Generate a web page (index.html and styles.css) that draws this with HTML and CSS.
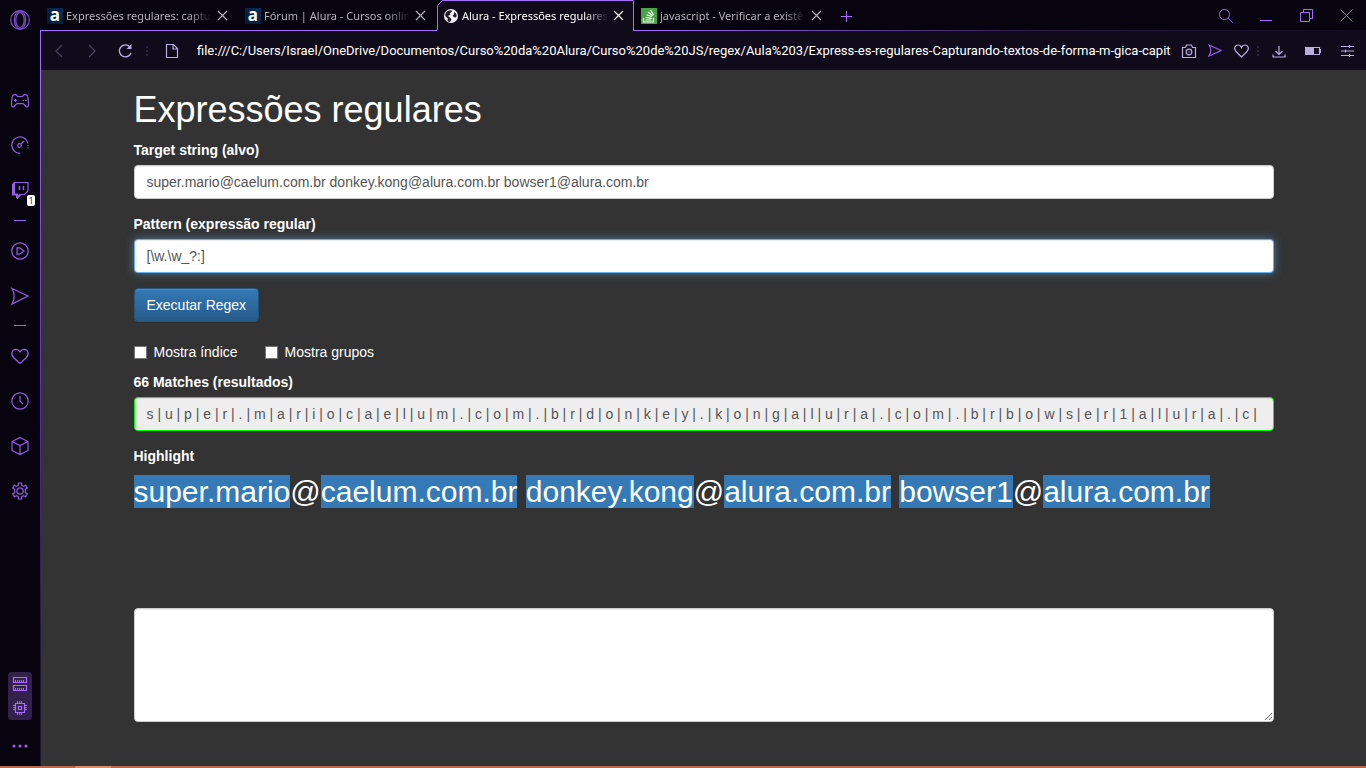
FILE: index.html
```html
<!DOCTYPE html>
<html lang="pt-BR">
<head>
<meta charset="utf-8">
<meta name="viewport" content="width=device-width, initial-scale=1">
<title>Alura - Expressões regulares</title>
<link rel="stylesheet" href="styles.css">
</head>
<body>
<div class="window">
  <nav class="sidebar" aria-label="Barra lateral">
    <button class="side-logo" aria-label="Menu">
      <svg width="22" height="22" viewBox="0 0 22 22"><circle cx="11" cy="11" r="9.3"/><ellipse cx="11" cy="11" rx="5.6" ry="9.2"/><ellipse cx="11" cy="11" rx="4.2" ry="7.4"/></svg>
    </button>
    <button class="side-item" aria-label="GX Corner">
      <svg width="20" height="16" viewBox="0 0 20 16"><path d="M6 1.700C4 1.200 2.600 2 2.200 3.800L1.500 9.500C1.200 12.500 1.800 14 3.200 14c1.800 0 2.200-3.400 4-3.400h5.600c1.800 0 2.200 3.400 4 3.400 1.400 0 2-1.500 1.700-4.500L17.800 3.800C17.400 2 16 1.200 14 1.700L12.500 3.500h-5z"/><path d="M5.500 6v3M4 7.500h3M12.500 7.500h1.500M15 7.500h1.500"/></svg>
    </button>
    <button class="side-item" aria-label="GX Control">
      <svg width="20" height="20" viewBox="0 0 20 20"><path d="M10 17.300A8.200 8.200 0 1 1 18 7.500"/><path d="M18 9v5" stroke-dasharray="1 1.500"/><circle cx="9.500" cy="9.500" r="1.800"/><path d="M11 8l3-3"/></svg>
    </button>
    <button class="side-item" aria-label="Twitch">
      <svg width="20" height="20" viewBox="0 0 20 20"><path d="M4 1.500h14v8.500l-3.500 3.500H11L7.500 17v-3.500H4z"/><path class="solid" d="M2 3l3-1.500v11h3v2l1.500-1.500H11L8 17H6v-2.500H2z"/><path d="M9.500 5v4M13.500 5v4" stroke-width="1.500"/></svg>
      <span class="badge">1</span>
    </button>
    <span class="side-rule"></span>
    <button class="side-item" aria-label="Player">
      <svg width="20" height="20" viewBox="0 0 20 20"><circle cx="10" cy="10" r="8.200"/><path d="M7 6.800v6.400h2.500l4.500-3.200-4.500-3.200z"/></svg>
    </button>
    <button class="side-item" aria-label="My Flow">
      <svg width="20" height="20" viewBox="0 0 20 20"><path d="M2 2.500L18 10 2 18q4.500-8 0-15.500z"/></svg>
    </button>
    <span class="side-rule"></span>
    <button class="side-item" aria-label="Favoritos">
      <svg width="20" height="18" viewBox="0 0 20 18"><path d="M10 16.500L3.500 10.500C0 6.500 2.500 2.300 5.800 2.300 8 2.300 9.200 3.500 10 5 10.800 3.500 12 2.300 14.200 2.300c3.300 0 5.800 4.200 2.300 8.200z"/></svg>
    </button>
    <button class="side-item" aria-label="Histórico">
      <svg width="20" height="20" viewBox="0 0 20 20"><circle cx="10" cy="10" r="8.200"/><path d="M10 5v5l3 3.200"/></svg>
    </button>
    <button class="side-item" aria-label="Extensões">
      <svg width="20" height="20" viewBox="0 0 20 20"><path d="M10 1.500l8 4v9l-8 4-8-4v-9zM2 5.500l8 4 8-4M10 9.500v9"/></svg>
    </button>
    <button class="side-item" aria-label="Configurações">
      <svg width="20" height="20" viewBox="0 0 20 20"><circle cx="10" cy="10" r="3.200"/><path d="M8.400 2h3.200v2.200l2 1.200 2-1.100 1.700 2.800-2 1.200v3.400l2 1.200-1.700 2.800-2-1.100-2 1.200V18H8.400v-2.200l-2-1.200-2 1.100-1.700-2.800 2-1.200V8.300l-2-1.200 1.700-2.800 2 1.100 2-1.200z"/></svg>
    </button>
    <button class="side-meter" aria-label="RAM e CPU">
      <svg width="16" height="16" viewBox="0 0 16 16"><path d="M1.500 1.500h13v5h-13zM1.500 9.500h13v5h-13z"/><path d="M3 5h10M3 13h10" stroke-width="2" stroke-dasharray="1 1"/></svg>
      <svg width="16" height="16" viewBox="0 0 16 16"><path d="M3.500 3.500h9v9h-9zM6.500 6.500h3v3h-3z"/><path d="M5 2h6M5 14h6" stroke-width="2" stroke-dasharray="1 1"/><path d="M2 5v6M14 5v6" stroke-width="2" stroke-dasharray="1 1"/></svg>
    </button>
    <button class="side-more" aria-label="Mais">
      <svg width="16" height="4" viewBox="0 0 16 4"><g class="solid"><circle cx="2" cy="2" r="1.600"/><circle cx="8" cy="2" r="1.600"/><circle cx="14" cy="2" r="1.600"/></g></svg>
    </button>
  </nav>

  <div class="main">
    <header class="tabbar">
      <div class="tab">
        <span class="favicon alura">a</span>
        <a class="tab-title" href="#">Expressões regulares: captu</a>
        <button class="tab-close" aria-label="Fechar aba"><svg width="11" height="11" viewBox="0 0 11 11"><path d="M1 1l9 9M10 1l-9 9"/></svg></button>
      </div>
      <div class="tab">
        <span class="favicon alura">a</span>
        <a class="tab-title" href="#">Fórum | Alura - Cursos onlin</a>
        <button class="tab-close" aria-label="Fechar aba"><svg width="11" height="11" viewBox="0 0 11 11"><path d="M1 1l9 9M10 1l-9 9"/></svg></button>
      </div>
      <div class="tab active">
        <svg class="tab-shape" width="198" height="31" viewBox="0 0 198 31"><path d="M0 30.500L.5 30V5.500L5.500.5H196.500V30.500H198V31H0z"/><path class="edge" d="M-1 30.500L.5 29.500V5.500L5.500.5H196.500V30.500H198"/></svg>
        <svg class="favicon globe" width="16" height="16" viewBox="0 0 16 16"><circle cx="8" cy="8" r="7" fill="#f4f2f8"/><path fill="#211d2b" d="M3 4.500Q5 2 8.500 2.300L9 3.500 7 5l.5 1.500L5 8l2 1.500 1.500 2L7 14Q5.500 14 4.500 13l.3-2.500L2.200 8Q2 6 3 4.500zM11 4l2 1.500.8 2.500-1 1.500-2-.5L9.500 7.500 11 6.500z"/></svg>
        <a class="tab-title" href="#">Alura - Expressões regulares</a>
        <button class="tab-close" aria-label="Fechar aba"><svg width="11" height="11" viewBox="0 0 11 11"><path d="M1 1l9 9M10 1l-9 9"/></svg></button>
      </div>
      <div class="tab">
        <svg class="favicon" width="16" height="16" viewBox="0 0 16 16"><path fill="#47a344" d="M0 0h16v16H0z"/><path d="M2.500 10v4h10v-4M4.500 12h6M4.700 9.500l6 .8M5.500 6.700l5.600 2M7 4l4.700 3.700M9.500 2l3.200 5" fill="none" stroke="#fff" stroke-width="1.200"/></svg>
        <a class="tab-title" href="#">javascript - Verificar a existê</a>
        <button class="tab-close" aria-label="Fechar aba"><svg width="11" height="11" viewBox="0 0 11 11"><path d="M1 1l9 9M10 1l-9 9"/></svg></button>
      </div>
      <button class="tab-new" aria-label="Nova aba"><svg width="12" height="12" viewBox="0 0 12 12"><path d="M6.500 1v11M1 6.500h11"/></svg></button>
      <div class="window-controls">
        <button aria-label="Pesquisar"><svg width="16" height="16" viewBox="0 0 16 16"><circle cx="6.500" cy="6.500" r="5"/><path d="M10.200 10.200l4.500 4.500"/></svg></button>
        <button aria-label="Minimizar"><svg width="12" height="12" viewBox="0 0 12 12"><path d="M0 10.500h12"/></svg></button>
        <button aria-label="Restaurar"><svg width="13" height="13" viewBox="0 0 13 13"><path d="M.5 3.500h9v9h-9zM3.500 3.500v-3h9v9h-3"/></svg></button>
        <button aria-label="Fechar"><svg width="13" height="13" viewBox="0 0 13 13"><path d="M.5.5l12 12M12.500.5l-12 12"/></svg></button>
      </div>
    </header>

    <div class="toolbar">
      <button class="nav dim" aria-label="Voltar"><svg width="8" height="14" viewBox="0 0 8 14"><path d="M7 1L1 7l6 6"/></svg></button>
      <button class="nav dim" aria-label="Avançar"><svg width="8" height="14" viewBox="0 0 8 14"><path d="M1 1l6 6-6 6"/></svg></button>
      <button class="nav" aria-label="Recarregar"><svg width="16" height="16" viewBox="0 0 16 16"><path d="M14 10A6 6 0 1 1 13 4" stroke-width="1.400"/><path class="solid" d="M14.500 1v5h-5z"/></svg></button>
      <span class="dots"></span>
      <label class="page-icon" for="address" aria-label="Endereço"><svg width="14" height="16" viewBox="0 0 14 16"><path d="M1.500 1.500h7l4 4v9h-11zM8 1.500V6h4.500"/></svg></label>
      <input class="address" id="address" type="text" value="file:///C:/Users/Israel/OneDrive/Documentos/Curso%20da%20Alura/Curso%20de%20JS/regex/Aula%203/Express-es-regulares-Capturando-textos-de-forma-m-gica-capit">
      <button class="tool" aria-label="Captura"><svg width="16" height="14" viewBox="0 0 16 14"><path d="M1.500 3.500h3l1-2.500h5l1 2.500h3v10h-13z"/><circle cx="8" cy="8" r="2.800"/><circle class="solid" cx="8" cy="8" r=".7"/></svg></button>
      <button class="tool accent" aria-label="Enviar ao My Flow"><svg width="14" height="13" viewBox="0 0 14 13"><path d="M1 1l12 5.500L1 12q3.500-5.500 0-11z"/></svg></button>
      <button class="tool" aria-label="Favoritar"><svg width="15" height="14" viewBox="0 0 15 14"><path d="M7.500 13L2 7.500C-.8 4 1.500 1 4 1 6 1 7 2.200 7.500 3.500 8 2.200 9 1 11 1c2.500 0 4.800 3 2 6.500z"/></svg></button>
      <span class="dots short"></span>
      <button class="tool wide" aria-label="Downloads"><svg width="14" height="14" viewBox="0 0 14 14"><path d="M7 2v8M3.500 7L7 10.500 10.500 7M1 10.500v2.500h12v-2.500"/></svg></button>
      <button class="tool wide" aria-label="Bateria"><svg width="16" height="8" viewBox="0 0 16 8"><path d="M.5.5h14v7H.5zM15.500 2v4"/><path class="solid" d="M1 1h8v6H1z"/></svg></button>
      <button class="tool wide" aria-label="Configuração fácil"><svg width="13" height="12" viewBox="0 0 13 12"><path d="M0 1.500h13M0 6h13M0 10.500h13M8.500 0v3M4.500 4.500v3M8.500 9v3" stroke-width="1"/></svg></button>
    </div>

    <main class="page">
      <form class="container">
        <h1>Expressões regulares</h1>
        <div class="group">
          <label for="target">Target string (alvo)</label>
          <input class="field" id="target" type="text" value="super.mario@caelum.com.br donkey.kong@alura.com.br bowser1@alura.com.br">
        </div>
        <div class="group">
          <label for="pattern">Pattern (expressão regular)</label>
          <input class="field focused" id="pattern" type="text" value="[\w.\w_?:]">
        </div>
        <button class="run" type="button">Executar Regex</button>
        <div class="checks">
          <label><input type="checkbox">Mostra índice</label>
          <label><input type="checkbox">Mostra grupos</label>
        </div>
        <div class="group">
          <label for="matches">66 Matches (resultados)</label>
          <input class="field matches" id="matches" type="text" readonly value="s | u | p | e | r | . | m | a | r | i | o | c | a | e | l | u | m | . | c | o | m | . | b | r | d | o | n | k | e | y | . | k | o | n | g | a | l | u | r | a | . | c | o | m | . | b | r | b | o | w | s | e | r | 1 | a | l | u | r | a | . | c | o | m | . | b | r">
        </div>
        <div class="result">
          <label for="notes">Highlight</label>
          <p class="highlight"><mark>super.mario</mark>@<mark>caelum.com.br</mark> <mark>donkey.kong</mark>@<mark>alura.com.br</mark> <mark>bowser1</mark>@<mark>alura.com.br</mark></p>
        </div>
        <textarea class="field" id="notes" rows="5"></textarea>
      </form>
    </main>
  </div>
</div>
<div class="taskbar-edge"></div>
</body>
</html>
```
FILE: styles.css
```css
* { box-sizing: border-box; }

body {
  display: flex;
  flex-direction: column;
  min-height: 100vh;
  margin: 0;
  background: #07040f;
  font-family: "Liberation Sans", Arial, sans-serif;
  font-size: 14px;
  line-height: 20px;
  color: #fff;
}

button {
  padding: 0;
  border: 0;
  background: none;
  color: inherit;
  font: inherit;
}

svg {
  display: block;
  flex: none;
  fill: none;
  stroke: currentColor;
  stroke-width: 1.2;
}

.solid { fill: currentColor; stroke: none; }

.window { display: flex; flex: 1; }

/* Sidebar */
.sidebar {
  display: flex;
  flex: none;
  flex-direction: column;
  align-items: center;
  width: 40px;
  padding-bottom: 8px;
  color: #965ee6;
}

.sidebar button {
  display: flex;
  flex: none;
  align-items: center;
  justify-content: center;
  width: 40px;
}

.side-logo { height: 40px; margin-bottom: 38px; color: #8350cf; }
.side-item { position: relative; height: 45px; }

.side-rule {
  width: 12px;
  height: 1px;
  margin: 7px 0;
  background: currentColor;
}

.badge {
  position: absolute;
  right: 5px;
  bottom: 7px;
  width: 8px;
  border-radius: 2px;
  background: #fff;
  color: #222;
  font-family: "Open Sans", sans-serif;
  font-size: 9px;
  line-height: 11px;
}

.sidebar .side-meter {
  flex-direction: column;
  gap: 8px;
  width: 24px;
  height: 48px;
  margin-top: auto;
  border-radius: 4px;
  background: #33204d;
  color: #a56bff;
}

.side-more { height: 24px; margin-top: 14px; }

/* Tabs */
.main {
  display: flex;
  flex: 1;
  flex-direction: column;
  min-width: 0;
}

.tabbar {
  display: flex;
  height: 31px;
  padding-left: 1px;
  background: linear-gradient(to right, #a56bff 45%, #2b1c49 75%, #0f0b1b) bottom / 100% 1px no-repeat;
  font-family: "Noto Sans", "Open Sans", sans-serif;
  font-size: 11px;
}

.tab {
  position: relative;
  display: flex;
  align-items: center;
  width: 198px;
  padding: 0 11px 0 6px;
  color: #b4b2b8;
}

.tab.active { color: #fff; }

.tab-shape { position: absolute; top: 0; left: 0; fill: #0f0b1b; stroke: none; overflow: visible; }
.edge { fill: none; stroke: #a56bff; stroke-width: 1; }

.favicon { flex: none; width: 16px; height: 16px; stroke: none; }
.globe { position: relative; }

.alura {
  background: linear-gradient(to top right, #051833, #0a2d59);
  color: #fff;
  font-family: "Open Sans", sans-serif;
  font-size: 17px;
  font-weight: 700;
  line-height: 13px;
  text-align: center;
}

.tab-title {
  position: relative;
  flex: 1;
  min-width: 0;
  margin: 0 5px 0 3px;
  overflow: hidden;
  color: inherit;
  text-decoration: none;
  white-space: nowrap;
  -webkit-mask-image: linear-gradient(to right, #000 84%, transparent);
  mask-image: linear-gradient(to right, #000 84%, transparent);
}

.tab-close { position: relative; }
.tab-new { width: 26px; color: #a56bff; }
.tab-new svg { margin: auto; stroke-width: 1; }

.window-controls { display: flex; margin-left: auto; color: #a56bff; }

.window-controls button {
  display: flex;
  align-items: center;
  justify-content: center;
  width: 40px;
}

.window-controls svg { stroke-width: 1; }

/* Toolbar */
.toolbar {
  display: flex;
  align-items: center;
  height: 39px;
  padding: 0 2px 0 1px;
  border-left: 1px solid #a56bff;
  background: #0f0b1b;
  color: #b9aee0;
}

.toolbar svg { margin: auto; }
.nav { width: 33px; }
.dim { color: #4b4360; }
.page-icon { width: 38px; }
.tool { width: 26px; }
.wide { width: 34px; }
.accent { color: #965ee6; }

.dots {
  width: 12px;
  height: 10px;
  background: repeating-linear-gradient(#2b2348 0 2px, transparent 2px 4px) center / 2px 100% no-repeat;
}

.short { width: 8px; }

.address {
  flex: 1;
  min-width: 0;
  padding: 0 4px 0 6px;
  border: 0;
  outline: 0;
  background: none;
  color: #fff;
  font-family: Roboto, "Noto Sans", sans-serif;
  font-size: 13px;
  line-height: 20px;
}

/* Page */
.page {
  flex: 1;
  border-left: 1px solid;
  border-image: linear-gradient(#a56bff, #5b2ca8 50%, #1d1430 85%) 1;
  background: #333;
}

.container {
  max-width: 1170px;
  margin: 0 auto;
  padding: 0 15px 44px;
}

h1 {
  margin: 20px 0 10px;
  font-size: 36px;
  font-weight: 400;
  line-height: 40px;
}

.group { margin-bottom: 15px; }

.group label,
.result label {
  display: block;
  margin-bottom: 5px;
  font-weight: 700;
}

.field {
  display: block;
  width: 100%;
  height: 34px;
  padding: 6px 12px;
  border: 1px solid #ccc;
  border-radius: 4px;
  outline: 0;
  background: #fff;
  box-shadow: inset 0 1px 1px rgba(0, 0, 0, .075);
  color: #555;
  font: inherit;
}

.focused {
  border-color: #66afe9;
  box-shadow: inset 0 1px 1px rgba(0, 0, 0, .075), 0 0 8px rgba(102, 175, 233, .6);
}

.matches { border-color: #0f0; background: #eee; }

textarea.field { height: auto; resize: vertical; }

.run {
  display: block;
  padding: 6px 12px;
  border: 1px solid #245580;
  border-radius: 4px;
  background: linear-gradient(#337ab7, #265a88);
  box-shadow: inset 0 1px 0 rgba(255, 255, 255, .15), 0 1px 1px rgba(0, 0, 0, .075);
}

.checks { display: flex; gap: 27px; margin: 20px 0 10px; }
.checks label { display: flex; align-items: center; }

.checks input {
  width: 13px;
  height: 13px;
  margin: 0 7px 0 0;
  border: 1px solid #767676;
  appearance: none;
  background: #fff;
}

.result { min-height: 162px; }

.highlight {
  margin: 0;
  font-size: 30px;
  line-height: 42px;
}

mark { background: #337ab7; color: #fff; }

/* Top edge of the desktop taskbar */
.taskbar-edge {
  height: 2px;
  background: linear-gradient(#d98c68, #d98c68) 75px 0 / 36px 2px no-repeat #b9694a;
}
```
